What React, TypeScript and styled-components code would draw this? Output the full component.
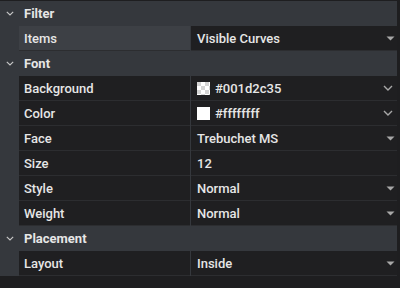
import React from "react";
import styled, { createGlobalStyle } from "styled-components";

const GlobalStyle = createGlobalStyle`
  html, body {
    margin: 0;
    padding: 0;
    background: #1e1e20;
  }
  body {
    font-family: Roboto, "Noto Sans", sans-serif;
  }
`;

const Panel = styled.div`
  width: 400px;
  height: 288px;
  box-sizing: border-box;
  padding: 1px 3px 0 0;
  background: #1e1e20;
  overflow: hidden;
`;

const Grid = styled.div`
  display: flex;
  flex-direction: column;
`;

const HeaderRow = styled.div`
  display: flex;
  align-items: center;
  height: 25px;
  background: #35383d;
  color: #e6e6e6;
  font-size: 13px;
  font-weight: 700;
`;

const Chevron = styled.span`
  width: 21px;
  display: flex;
  justify-content: center;
  align-items: center;
  margin-right: 3px;
  svg {
    display: block;
  }
`;

const Row = styled.div`
  display: flex;
  height: 25px;
  background: #35383d;
`;

const Label = styled.div<{ $active?: boolean }>`
  margin-left: 19px;
  width: 171px;
  display: flex;
  align-items: center;
  padding-left: 5px;
  box-sizing: border-box;
  background: ${(p) => (p.$active ? "#3d4045" : "#1f1f21")};
  border-bottom: 1px solid #2c2d30;
  color: #e6e6e6;
  font-size: 13px;
  font-weight: 500;
`;

const Value = styled.div`
  flex: 1;
  display: flex;
  align-items: center;
  margin-left: 1px;
  padding: 0 2px 0 6px;
  background: #1f1f21;
  border-bottom: 1px solid #2c2d30;
  color: #e6e6e6;
  font-size: 13px;
  font-weight: 500;
  gap: 5px;
`;

const ValueText = styled.span`
  flex: 1;
  white-space: nowrap;
`;

const Swatch = styled.span<{ $checker?: boolean }>`
  width: 13px;
  height: 13px;
  flex: none;
  background: ${(p) =>
    p.$checker
      ? "repeating-conic-gradient(#ffffff 0 25%, #d4d4d4 0 50%) 0 0 / 8px 8px"
      : "#ffffff"};
`;

const Caret = () => (
  <svg width="9" height="5" viewBox="0 0 9 5">
    <path d="M0.5 0.5 L8.5 0.5 L4.5 4.5 Z" fill="#a8a8a8" />
  </svg>
);

const DownChevron = ({ color = "#a8a8a8", size = 10 }: { color?: string; size?: number }) => (
  <svg width={size} height={size * 0.6} viewBox="0 0 10 6" style={{ marginRight: 2 }}>
    <path d="M1 1 L5 5 L9 1" fill="none" stroke={color} strokeWidth="1.4" />
  </svg>
);

type Item = {
  label: string;
  value: string;
  kind?: "select" | "color" | "text";
  swatch?: "checker" | "white";
  active?: boolean;
};

type Section = { title: string; items: Item[] };

const sections: Section[] = [
  {
    title: "Filter",
    items: [{ label: "Items", value: "Visible Curves", kind: "select", active: true }],
  },
  {
    title: "Font",
    items: [
      { label: "Background", value: "#001d2c35", kind: "color", swatch: "checker" },
      { label: "Color", value: "#ffffffff", kind: "color", swatch: "white" },
      { label: "Face", value: "Trebuchet MS", kind: "select" },
      { label: "Size", value: "12", kind: "text" },
      { label: "Style", value: "Normal", kind: "select" },
      { label: "Weight", value: "Normal", kind: "select" },
    ],
  },
  {
    title: "Placement",
    items: [{ label: "Layout", value: "Inside", kind: "select" }],
  },
];

const App: React.FC = () => (
  <Panel>
    <GlobalStyle />
    <Grid>
      {sections.map((s) => (
        <React.Fragment key={s.title}>
          <HeaderRow>
            <Chevron>
              <DownChevron color="#c8c8c8" size={8} />
            </Chevron>
            {s.title}
          </HeaderRow>
          {s.items.map((it) => (
            <Row key={it.label}>
              <Label $active={it.active}>{it.label}</Label>
              <Value>
                {it.swatch && <Swatch $checker={it.swatch === "checker"} />}
                <ValueText>{it.value}</ValueText>
                {it.kind === "select" && <Caret />}
                {it.kind === "color" && <DownChevron />}
              </Value>
            </Row>
          ))}
        </React.Fragment>
      ))}
    </Grid>
  </Panel>
);

export default App;
